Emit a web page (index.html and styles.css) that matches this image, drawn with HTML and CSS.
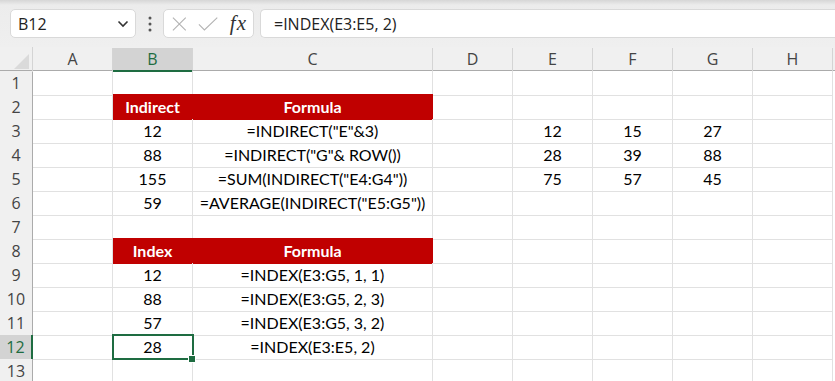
FILE: index.html
```html
<!DOCTYPE html>
<html lang="en">
<head>
    <meta charset="UTF-8">
    <title>INDEX and INDIRECT</title>
    <link rel="stylesheet" href="styles.css">
</head>
<body>

<div class="toolbar">
    <div class="namebox">
        <span>B12</span>
        <svg class="chevron" width="12" height="8" viewBox="0 0 12 8"><path d="M1.5 1.5 L6 6 L10.5 1.5" fill="none" stroke="#333" stroke-width="1.6"/></svg>
    </div>
    <svg class="dots" width="4" height="16" viewBox="0 0 4 16"><circle cx="2" cy="2" r="1.5"/><circle cx="2" cy="8" r="1.5"/><circle cx="2" cy="14" r="1.5"/></svg>
    <div class="fxbox">
        <svg width="16" height="16" viewBox="0 0 16 16"><path d="M1 1 L15 15 M15 1 L1 15" stroke="#b3b3b3" stroke-width="1.2" fill="none"/></svg>
        <svg width="22" height="16" viewBox="0 0 22 16"><path d="M1 8.5 L7 14.5 L21 1" stroke="#b3b3b3" stroke-width="1.2" fill="none"/></svg>
        <span class="fx">fx</span>
    </div>
    <div class="formula">=INDEX(E3:E5, 2)</div>
</div>

<div class="sheet">
    <div class="row head">
        <div class="corner"><span class="tri"></span></div>
        <div class="ch">A</div><div class="ch sel">B</div><div class="ch">C</div><div class="ch">D</div>
        <div class="ch">E</div><div class="ch">F</div><div class="ch">G</div><div class="ch">H</div>
    </div>
    <div class="row">
        <div class="rh">1</div>
        <div class="c"></div><div class="c"></div><div class="c"></div><div class="c"></div>
        <div class="c"></div><div class="c"></div><div class="c"></div><div class="c"></div>
    </div>
    <div class="row">
        <div class="rh">2</div>
        <div class="c"></div><div class="c red">Indirect</div><div class="c red">Formula</div><div class="c"></div>
        <div class="c"></div><div class="c"></div><div class="c"></div><div class="c"></div>
    </div>
    <div class="row">
        <div class="rh">3</div>
        <div class="c"></div><div class="c">12</div><div class="c">=INDIRECT("E"&amp;3)</div><div class="c"></div>
        <div class="c">12</div><div class="c">15</div><div class="c">27</div><div class="c"></div>
    </div>
    <div class="row">
        <div class="rh">4</div>
        <div class="c"></div><div class="c">88</div><div class="c">=INDIRECT("G"&amp; ROW())</div><div class="c"></div>
        <div class="c">28</div><div class="c">39</div><div class="c">88</div><div class="c"></div>
    </div>
    <div class="row">
        <div class="rh">5</div>
        <div class="c"></div><div class="c">155</div><div class="c">=SUM(INDIRECT("E4:G4"))</div><div class="c"></div>
        <div class="c">75</div><div class="c">57</div><div class="c">45</div><div class="c"></div>
    </div>
    <div class="row">
        <div class="rh">6</div>
        <div class="c"></div><div class="c">59</div><div class="c">=AVERAGE(INDIRECT("E5:G5"))</div><div class="c"></div>
        <div class="c"></div><div class="c"></div><div class="c"></div><div class="c"></div>
    </div>
    <div class="row">
        <div class="rh">7</div>
        <div class="c"></div><div class="c"></div><div class="c"></div><div class="c"></div>
        <div class="c"></div><div class="c"></div><div class="c"></div><div class="c"></div>
    </div>
    <div class="row">
        <div class="rh">8</div>
        <div class="c"></div><div class="c red">Index</div><div class="c red">Formula</div><div class="c"></div>
        <div class="c"></div><div class="c"></div><div class="c"></div><div class="c"></div>
    </div>
    <div class="row">
        <div class="rh">9</div>
        <div class="c"></div><div class="c">12</div><div class="c">=INDEX(E3:G5, 1, 1)</div><div class="c"></div>
        <div class="c"></div><div class="c"></div><div class="c"></div><div class="c"></div>
    </div>
    <div class="row">
        <div class="rh">10</div>
        <div class="c"></div><div class="c">88</div><div class="c">=INDEX(E3:G5, 2, 3)</div><div class="c"></div>
        <div class="c"></div><div class="c"></div><div class="c"></div><div class="c"></div>
    </div>
    <div class="row">
        <div class="rh">11</div>
        <div class="c"></div><div class="c">57</div><div class="c">=INDEX(E3:G5, 3, 2)</div><div class="c"></div>
        <div class="c"></div><div class="c"></div><div class="c"></div><div class="c"></div>
    </div>
    <div class="row">
        <div class="rh sel">12</div>
        <div class="c"></div><div class="c active">28<span class="handle"></span></div><div class="c">=INDEX(E3:E5, 2)</div><div class="c"></div>
        <div class="c"></div><div class="c"></div><div class="c"></div><div class="c"></div>
    </div>
    <div class="row">
        <div class="rh">13</div>
        <div class="c"></div><div class="c"></div><div class="c"></div><div class="c"></div>
        <div class="c"></div><div class="c"></div><div class="c"></div><div class="c"></div>
    </div>
</div>

</body>
</html>
```

FILE: styles.css
```css
* {
    box-sizing: border-box;
}
body {
    margin: 0;
    background: #fff;
    font-family: "Open Sans", "Noto Sans", sans-serif;
    overflow: hidden;
}

/* formula bar */
.toolbar {
    height: 47px;
    background: linear-gradient(#d6d6d6 0px, #ececec 5px, #efefef 100%);
    display: flex;
    align-items: flex-start;
    padding: 9px 0 0 10px;
}
.namebox, .fxbox, .formula {
    height: 29px;
    background: #fff;
    border: 1px solid #d9d9d9;
    border-radius: 5px;
    display: flex;
    align-items: center;
}
.namebox {
    width: 126px;
    padding: 0 6px 0 7px;
    justify-content: space-between;
    font-size: 16px;
    color: #222;
}
.dots {
    fill: #555;
    margin: 7px 11px 0 12px;
}
.fxbox {
    width: 91px;
    padding: 0 6px 0 8px;
    gap: 11px;
}
.fx {
    font-family: "Liberation Serif", serif;
    font-style: italic;
    font-size: 21px;
    color: #333;
    margin-left: 1px;
    letter-spacing: 1px;
}
.formula {
    flex: 1;
    margin-left: 6px;
    border-right: none;
    border-radius: 5px 0 0 5px;
    padding-left: 13px;
    font-size: 16px;
    color: #222;
}

/* grid */
.row {
    display: grid;
    grid-template-columns: 33px 80px 80px 240px 80px 80px 80px 80px 80px;
    height: 24px;
}
.head {
    background: #f0f0f0;
    border-bottom: 1px solid #ababab;
}
.corner {
    border-right: 1px solid #d4d4d4;
    position: relative;
}
.tri {
    position: absolute;
    right: 3px;
    bottom: 3px;
    width: 0;
    height: 0;
    border-left: 15px solid transparent;
    border-bottom: 15px solid #dadada;
}
.ch {
    margin-top: 1px;
    border-right: 1px solid #d4d4d4;
    text-align: center;
    font-size: 16px;
    line-height: 22px;
    color: #444;
}
.ch.sel {
    background: #d3d3d3;
    color: #1e6c41;
    border-bottom: 2px solid #1e6c41;
}
.rh {
    background: #f0f0f0;
    border-right: 1px solid #ababab;
    border-bottom: 1px solid #d4d4d4;
    text-align: center;
    font-size: 16px;
    line-height: 24px;
    color: #444;
}
.rh.sel {
    background: #d3d3d3;
    color: #1e6c41;
    border-right: 2px solid #1e6c41;
}
.c {
    border-right: 1px solid #e1e1e1;
    border-bottom: 1px solid #e1e1e1;
    text-align: center;
    font-family: "Lato", sans-serif;
    font-size: 16px;
    line-height: 24px;
    color: #000;
    white-space: nowrap;
}
.c.red {
    background: #c00000;
    border-color: #c00000;
    color: #fff;
    font-weight: bold;
    box-shadow: 0 -1px 0 #c00000;
}
.c.active {
    position: relative;
}
.c.active::before {
    content: "";
    position: absolute;
    left: -1px;
    top: -1px;
    right: -2px;
    bottom: -1px;
    border: 2px solid #1e6c41;
}
.handle {
    position: absolute;
    right: -4px;
    bottom: -4px;
    width: 6px;
    height: 6px;
    background: #1e6c41;
    border: 1px solid #fff;
    box-sizing: content-box;
}
```
